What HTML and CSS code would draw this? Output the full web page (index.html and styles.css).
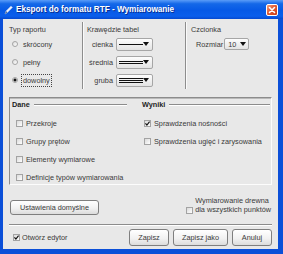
FILE: index.html
```html
<!DOCTYPE html>
<html lang="pl">
<head>
    <meta charset="UTF-8">
    <title>Eksport do formatu RTF - Wymiarowanie</title>
    <link rel="stylesheet" href="styles.css">
</head>
<body>
    <div class="window">
        <div class="titlebar">
            <svg class="app-icon" width="9" height="10" viewBox="0 0 9 10">
                <path d="M1 9 L2 6 L7 1 L8.5 2.5 L3.5 7.5 Z" fill="#e8f0ff" stroke="#9fb9e8" stroke-width="0.6"/>
                <path d="M1 9 L2 6 L3.5 7.5 Z" fill="#5a6f96"/>
            </svg>
            <span class="title">Eksport do formatu RTF - Wymiarowanie</span>
            <span class="close-btn">
                <svg width="8" height="8" viewBox="0 0 8 8">
                    <path d="M1.5 1.5 L6.5 6.5 M6.5 1.5 L1.5 6.5" stroke="#fff" stroke-width="1.6" stroke-linecap="round"/>
                </svg>
            </span>
        </div>

        <div class="client">
            <div class="top-row">
                <div class="group group-type">
                    <div class="group-title">Typ raportu</div>
                    <div class="radio-row"><span class="radio"></span><span>skrócony</span></div>
                    <div class="radio-row"><span class="radio"></span><span>pełny</span></div>
                    <div class="radio-row"><span class="radio on"></span><span class="focused">dowolny</span></div>
                </div>
                <div class="group group-edges">
                    <div class="group-title">Krawędzie tabel</div>
                    <div class="field-row">
                        <span class="field-label">cienka</span>
                        <span class="combo"><span class="sample sample-thin"></span><span class="arrow"></span></span>
                    </div>
                    <div class="field-row">
                        <span class="field-label">średnia</span>
                        <span class="combo"><span class="sample sample-mid"></span><span class="arrow"></span></span>
                    </div>
                    <div class="field-row">
                        <span class="field-label">gruba</span>
                        <span class="combo"><span class="sample sample-thick"></span><span class="arrow"></span></span>
                    </div>
                </div>
                <div class="group group-font">
                    <div class="group-title">Czcionka</div>
                    <div class="field-row font-row">
                        <span class="size-label">Rozmiar</span>
                        <span class="combo combo-size"><span class="combo-value">10</span><span class="arrow"></span></span>
                    </div>
                </div>
            </div>

            <div class="panel">
                <div class="panel-col col-data">
                    <div class="titled"><span>Dane</span><span class="rule"></span></div>
                    <div class="check-list">
                        <div class="check-row"><span class="check"></span><span>Przekroje</span></div>
                        <div class="check-row"><span class="check"></span><span>Grupy prętów</span></div>
                        <div class="check-row"><span class="check"></span><span>Elementy wymiarowe</span></div>
                        <div class="check-row"><span class="check"></span><span>Definicje typów wymiarowania</span></div>
                    </div>
                </div>
                <div class="panel-col col-results">
                    <div class="titled"><span>Wyniki</span><span class="rule"></span></div>
                    <div class="check-list">
                        <div class="check-row">
                            <span class="check on"><svg width="5" height="5" viewBox="0 0 5 5"><path d="M0.4 2.4 L1.9 4 L4.6 0.6" fill="none" stroke="#111" stroke-width="1.2"/></svg></span>
                            <span>Sprawdzenia nośności</span>
                        </div>
                        <div class="check-row"><span class="check"></span><span>Sprawdzenia ugięć i zarysowania</span></div>
                    </div>
                </div>
            </div>

            <div class="middle-row">
                <button class="btn btn-defaults">Ustawienia domyślne</button>
                <div class="wood-check">
                    <span class="check"></span>
                    <div class="wood-text">
                        <div>Wymiarowanie drewna</div>
                        <div>dla wszystkich punktów</div>
                    </div>
                </div>
            </div>

            <div class="separator"></div>

            <div class="bottom-row">
                <div class="open-editor">
                    <span class="check on"><svg width="5" height="5" viewBox="0 0 5 5"><path d="M0.4 2.4 L1.9 4 L4.6 0.6" fill="none" stroke="#111" stroke-width="1.2"/></svg></span>
                    <span>Otwórz edytor</span>
                </div>
                <div class="actions">
                    <button class="btn btn-save">Zapisz</button>
                    <button class="btn btn-save-as">Zapisz jako</button>
                    <button class="btn btn-cancel">Anuluj</button>
                </div>
            </div>
        </div>
    </div>
</body>
</html>
```

FILE: styles.css
```css
* {
    margin: 0;
    padding: 0;
    box-sizing: border-box;
}

body {
    margin: 0;
    background: #fff;
    font-family: 'Liberation Sans', Arial, sans-serif;
    font-size: 7.3px;
    color: #3a3a3a;
}

.window {
    width: 283px;
    height: 254px;
    display: flex;
    flex-direction: column;
    background: #0b4fd8;
}

/* title bar */
.titlebar {
    height: 19px;
    display: flex;
    align-items: center;
    padding: 0 5px 0 4px;
    background: linear-gradient(#5a9cf8, #1468e8 20%, #0659e6 55%, #0a5eec 85%, #0649cf);
}

.app-icon {
    margin-right: 3px;
}

.title {
    flex: 1;
    color: #fff;
    font-weight: bold;
    font-size: 8.2px;
    text-shadow: 1px 1px 0 #0a2f8f;
}

.close-btn {
    width: 12px;
    height: 12px;
    border: 1px solid #fff;
    border-radius: 2px;
    background: linear-gradient(135deg, #f3a07f, #e05a32 45%, #c83a15);
    display: flex;
    align-items: center;
    justify-content: center;
}

/* client area */
.client {
    flex: 1;
    margin: 0 5px 5px 3px;
    background: #e8e8e8;
    display: flex;
    flex-direction: column;
}

.top-row {
    display: flex;
    height: 67px;
    margin-top: 3px;
}

.group {
    padding-top: 3px;
    border-right: 1px solid #8d8d8d;
    box-shadow: 1px 0 0 #fafafa;
}

.group-type {
    width: 80px;
    padding-left: 6px;
}

.group-edges {
    width: 103px;
    padding-left: 4px;
}

.group-font {
    flex: 1;
    padding-left: 5px;
    border-right: none;
    box-shadow: none;
}

.group-title {
    height: 10px;
    line-height: 9px;
}

.radio-row {
    display: flex;
    align-items: center;
    gap: 5px;
    height: 18px;
    padding-left: 3px;
}

.radio {
    width: 6px;
    height: 6px;
    border-radius: 50%;
    border: 1px solid #a5a5a5;
    background: linear-gradient(135deg, #dcdcdc, #fff);
}

.radio.on {
    background: radial-gradient(circle, #111 0 1.3px, #f4f4f4 1.8px);
}

.focused {
    outline: 1px dotted #444;
    outline-offset: 1px;
}

.field-row {
    display: flex;
    align-items: center;
    height: 18px;
}

.field-label {
    width: 26px;
    margin-right: 3px;
    text-align: right;
}

.combo {
    width: 37px;
    height: 13px;
    display: flex;
    align-items: center;
    padding: 0 3px 0 2px;
    border: 1px solid #a6a6a6;
    border-radius: 2px;
    background: linear-gradient(#fdfdfd, #e3e3e3);
}

.sample {
    width: 24px;
    margin-right: auto;
}

.sample-thin {
    height: 1px;
    background: #111;
}

.sample-mid {
    height: 3px;
    border-top: 1px solid #111;
    border-bottom: 1px solid #111;
}

.sample-thick {
    height: 5px;
    background: repeating-linear-gradient(#111 0 1px, transparent 1px 2px);
}

.arrow {
    width: 0;
    height: 0;
    border-left: 3px solid transparent;
    border-right: 3px solid transparent;
    border-top: 4px solid #111;
}

.font-row {
    padding-left: 5px;
}

.size-label {
    margin-right: 1px;
}

.combo-size {
    width: 25px;
    height: 12px;
    padding: 0 2px 0 3px;
}

.combo-value {
    margin-right: auto;
}

/* Dane / Wyniki panel */
.panel {
    display: flex;
    height: 88px;
    margin: 8px 6px 0 6px;
    border: 1px solid;
    border-color: #8c8c8c #fcfcfc #fcfcfc #8c8c8c;
    box-shadow: inset 0 1px 0 #b9b9b9;
}

.panel-col {
    padding-top: 2px;
}

.col-data {
    width: 128px;
    padding-left: 2px;
    padding-right: 11px;
}

.col-results {
    flex: 1;
    padding-left: 4px;
    padding-right: 1px;
}

.titled {
    display: flex;
    align-items: center;
    height: 9px;
    font-weight: bold;
    color: #1e1e1e;
}

.rule {
    flex: 1;
    height: 1px;
    margin-left: 4px;
    background: #8c8c8c;
    box-shadow: 0 1px 0 #fff;
}

.check-list {
    margin-top: 5px;
}

.check-row {
    display: flex;
    align-items: center;
    gap: 3px;
    height: 18px;
}

.col-data .check-row {
    padding-left: 4px;
}

.col-results .check-row {
    padding-left: 2px;
}

.check {
    width: 7px;
    height: 7px;
    flex: none;
    display: flex;
    align-items: center;
    justify-content: center;
    border: 1px solid #a3a3a3;
    background: linear-gradient(135deg, #dadada, #fff);
}

/* lower part */
.middle-row {
    display: flex;
    align-items: flex-start;
    padding: 15px 7px 0 7px;
}

.btn {
    height: 17px;
    font-family: inherit;
    font-size: 7.3px;
    color: #3a3a3a;
    border: 1px solid #7f7f7f;
    border-radius: 3px;
    background: linear-gradient(#ffffff, #f2f2f2 55%, #dcdcdc);
}

.btn-defaults {
    width: 89px;
    height: 15px;
}

.wood-check {
    display: flex;
    align-items: flex-end;
    gap: 2px;
    margin-left: auto;
    margin-top: -4px;
}

.wood-text {
    line-height: 9px;
    text-align: left;
    white-space: nowrap;
}

.separator {
    height: 2px;
    margin: 9px 6px 0 6px;
    border-top: 1px solid #8c8c8c;
    border-bottom: 1px solid #fff;
}

.bottom-row {
    display: flex;
    align-items: center;
    height: 17px;
    margin-top: 3px;
    padding: 0 6px 0 10px;
}

.open-editor {
    display: flex;
    align-items: center;
    gap: 2px;
}

.actions {
    display: flex;
    gap: 4px;
    margin-left: auto;
}

.btn-save {
    width: 40px;
}

.btn-save-as {
    width: 55px;
}

.btn-cancel {
    width: 40px;
}
```
